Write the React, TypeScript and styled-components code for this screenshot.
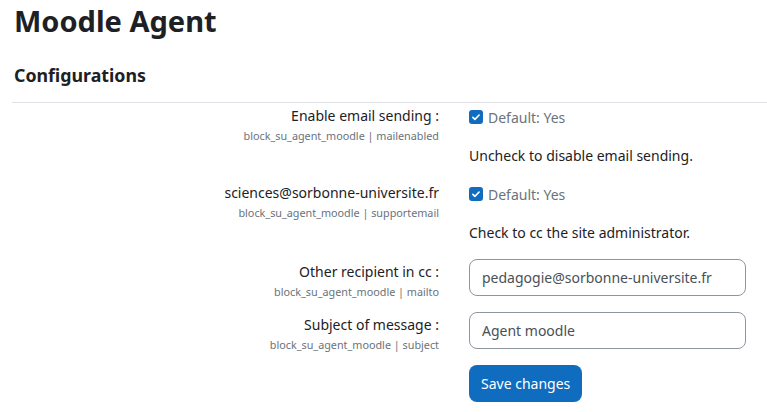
import React from 'react';
import styled, { createGlobalStyle } from 'styled-components';

const GlobalStyle = createGlobalStyle`
  body {
    margin: 0;
    background: #ffffff;
    font-family: 'Noto Sans', 'Open Sans', sans-serif;
    color: #1d2125;
  }
`;

type Setting =
  | { kind: 'check'; label: string; key: string; desc: string }
  | { kind: 'text'; label: string; key: string; value: string };

const settings: Setting[] = [
  {
    kind: 'check',
    label: 'Enable email sending :',
    key: 'block_su_agent_moodle | mailenabled',
    desc: 'Uncheck to disable email sending.',
  },
  {
    kind: 'check',
    label: 'sciences@sorbonne-universite.fr',
    key: 'block_su_agent_moodle | supportemail',
    desc: 'Check to cc the site administrator.',
  },
  {
    kind: 'text',
    label: 'Other recipient in cc :',
    key: 'block_su_agent_moodle | mailto',
    value: 'pedagogie@sorbonne-universite.fr',
  },
  {
    kind: 'text',
    label: 'Subject of message :',
    key: 'block_su_agent_moodle | subject',
    value: 'Agent moodle',
  },
];

function CheckIcon(): React.ReactElement {
  return (
    <svg width="10" height="10" viewBox="0 0 16 16">
      <path
        d="M3 8.5l3.2 3.2L13 4.8"
        fill="none"
        stroke="#fff"
        strokeWidth="2.6"
        strokeLinecap="round"
        strokeLinejoin="round"
      />
    </svg>
  );
}

function App(): React.ReactElement {
  return (
    <Page>
      <GlobalStyle />
      <Title>Moodle Agent</Title>
      <Section>Configurations</Section>
      <Divider />
      <Form>
        {settings.map((s) => (
          <Row key={s.key} $kind={s.kind}>
            <LabelCell $kind={s.kind}>
              <Label>{s.label}</Label>
              <Key>{s.key}</Key>
            </LabelCell>
            {s.kind === 'check' ? (
              <Field>
                <CheckLine>
                  <Box>
                    <CheckIcon />
                  </Box>
                  <Muted>Default: Yes</Muted>
                </CheckLine>
                <Desc>{s.desc}</Desc>
              </Field>
            ) : (
              <Field>
                <Input defaultValue={s.value} />
              </Field>
            )}
          </Row>
        ))}
        <Row $kind="button">
          <span />
          <Field>
            <SaveButton>Save changes</SaveButton>
          </Field>
        </Row>
      </Form>
    </Page>
  );
}

export default App;

const Page = styled.div`
  padding: 0 0 0 14px;
`;

const Title = styled.h1`
  margin: 0;
  padding-top: 1px;
  font-size: 29px;
  line-height: 40px;
  font-weight: 700;
`;

const Section = styled.h3`
  margin: 22px 0 0;
  font-size: 17.8px;
  line-height: 24px;
  font-weight: 700;
`;

const Divider = styled.hr`
  margin: 15px 0 0 -2px;
  border: 0;
  border-top: 1px solid #dee2e6;
`;

const Form = styled.div`
  display: flex;
  flex-direction: column;
  padding-top: 2px;
`;

const Row = styled.div<{ $kind: string }>`
  display: grid;
  grid-template-columns: 425px 1fr;
  column-gap: 30px;
  margin-bottom: ${(p) => (p.$kind === 'check' ? '14px' : p.$kind === 'text' ? '16px' : '0')};
`;

const LabelCell = styled.div<{ $kind: string }>`
  display: flex;
  flex-direction: column;
  align-items: flex-end;
  text-align: right;
  padding-top: ${(p) => (p.$kind === 'check' ? '0' : '2px')};
  height: ${(p) => (p.$kind === 'check' ? 'auto' : '35px')};
`;

const Label = styled.div`
  font-size: 14px;
  line-height: 22px;
`;

const Key = styled.div`
  font-size: 10.8px;
  line-height: 17px;
  color: #6a737b;
  white-space: nowrap;
`;

const Field = styled.div`
  display: flex;
  flex-direction: column;
  padding-right: 21px;
`;

const CheckLine = styled.div`
  display: flex;
  align-items: center;
  gap: 5px;
  height: 24px;
`;

const Box = styled.span`
  width: 14px;
  height: 14px;
  border-radius: 3px;
  background: #0f6cbf;
  display: flex;
  align-items: center;
  justify-content: center;
`;

const Muted = styled.span`
  font-size: 14px;
  color: #6a737b;
`;

const Desc = styled.div`
  margin-top: 15px;
  font-size: 14px;
  line-height: 24px;
`;

const Input = styled.input`
  box-sizing: border-box;
  width: 100%;
  height: 37px;
  padding: 0 12px;
  border: 1px solid #8f959e;
  border-radius: 8px;
  font-family: 'Noto Sans', 'Open Sans', sans-serif;
  font-size: 14px;
  color: #495057;
  background: #fff;
  outline: none;
`;

const SaveButton = styled.button`
  align-self: flex-start;
  height: 37px;
  padding: 0 12px;
  border: 0;
  border-radius: 8px;
  background: #0f6cbf;
  color: #fff;
  font-family: 'Noto Sans', 'Open Sans', sans-serif;
  font-size: 14px;
`;
